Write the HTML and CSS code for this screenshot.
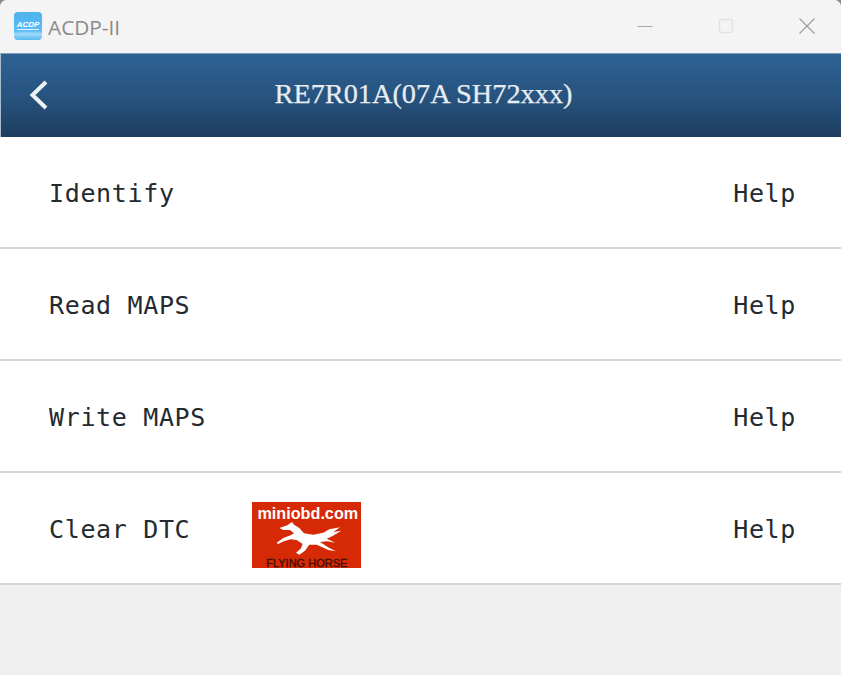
FILE: index.html
```html
<!DOCTYPE html>
<html lang="en">

<head>
    <meta charset="UTF-8">
    <meta name="viewport" content="width=device-width, initial-scale=1.0">
    <title>ACDP-II</title>
    <link rel="stylesheet" href="styles.css">
</head>

<body>
    <div class="window">
        <div class="titlebar">
            <div class="app-icon"><span>ACDP</span></div>
            <div class="app-name">ACDP-II</div>
            <div class="win-buttons">
                <svg class="win-btn" viewBox="0 0 16 16">
                    <path d="M0.5,8.5 L15.5,8.5" stroke="#a8a8a8" stroke-width="1" fill="none"></path>
                </svg>
                <svg class="win-btn" viewBox="0 0 16 16">
                    <rect x="1.5" y="1.5" width="13" height="13" rx="1.5" stroke="#e2e2e2" stroke-width="1.4" fill="none"></rect>
                </svg>
                <svg class="win-btn" viewBox="0 0 16 16">
                    <path d="M0.5,0.5 L15.5,15.5 M15.5,0.5 L0.5,15.5" stroke="#9a9a9a" stroke-width="1.1" fill="none"></path>
                </svg>
            </div>
        </div>

        <div class="header">
            <svg class="back" viewBox="0 0 22 32">
                <path d="M18,3 L4.5,16 18,29" stroke="#eef2f6" stroke-width="4" fill="none"></path>
            </svg>
            <div class="header-title">RE7R01A(07A SH72xxx)</div>
        </div>

        <div class="menu">
            <div class="menu-row">
                <div class="menu-label">Identify</div>
                <div class="menu-help">Help</div>
            </div>
            <div class="menu-row">
                <div class="menu-label">Read MAPS</div>
                <div class="menu-help">Help</div>
            </div>
            <div class="menu-row">
                <div class="menu-label">Write MAPS</div>
                <div class="menu-help">Help</div>
            </div>
            <div class="menu-row">
                <div class="menu-label">Clear DTC</div>
                <div class="stamp">
                    <div class="stamp-site">miniobd.com</div>
                    <svg class="stamp-horse" viewBox="0 0 228 120">
                        <path d="M28,30 L52,22 66,12 72,20 88,30 102,46 130,50 160,44 178,34 210,28 190,42 214,38 188,54 170,62 196,74 172,70 150,72 178,90 198,100 175,96 140,80 118,80 105,98 88,110 78,104 92,92 98,78 80,66 62,64 42,70 24,78 20,74 40,60 62,52 72,46 60,36 40,36 Z" fill="#fff"></path>
                    </svg>
                    <div class="stamp-name">FLYING HORSE</div>
                </div>
                <div class="menu-help">Help</div>
            </div>
        </div>
    </div>
</body>

</html>
```

FILE: styles.css
```css
* {
    box-sizing: border-box;
}

html,
body {
    width: 100vw;
    height: 100vh;
    background: #8c8c8c;
    margin: 0;
    padding: 0;
    overflow: hidden;
}

.window {
    display: flex;
    flex-direction: column;
    height: 100%;
    background: #f0f0f0;
    border-radius: 7px 7px 0 0;
    overflow: hidden;
}

.titlebar {
    display: flex;
    align-items: center;
    height: 53px;
    padding: 0 0 0 14px;
    background: #f4f4f4;
    flex-shrink: 0;
}

.app-icon {
    display: flex;
    justify-content: center;
    padding: 8px 0 0;
    width: 28px;
    height: 28px;
    margin: 0 6px 2px 0;
    border-radius: 4px;
    background: linear-gradient(180deg, #4fb2ee 0%, #5cbdf3 68%, #a4dcf8 78%, #56b8f0 100%);
}

.app-icon span {
    font-family: "Liberation Sans", sans-serif;
    font-size: 8px;
    line-height: 9px;
    font-weight: 700;
    font-style: italic;
    color: #fff;
    border-bottom: 1px solid #e4f5ff;
    height: 10px;
}

.app-name {
    font-family: "Open Sans", sans-serif;
    font-size: 20.8px;
    color: #8b8b8b;
}

.win-buttons {
    display: flex;
    align-items: center;
    gap: 65px;
    margin: 0 26px 2px auto;
}

.win-btn {
    width: 16px;
    height: 16px;
}

.header {
    position: relative;
    display: flex;
    align-items: center;
    justify-content: center;
    height: 84px;
    flex-shrink: 0;
    background: linear-gradient(180deg, #2d6193 0%, #275480 50%, #1d3d60 100%);
    border-top: 1px solid #7f9fbd;
    border-left: 1px solid #a8bccd;
}

.back {
    position: absolute;
    left: 27px;
    top: 25px;
    width: 22px;
    height: 32px;
}

.header-title {
    font-family: "Liberation Serif", serif;
    font-size: 28.3px;
    color: #e8edf2;
    -webkit-text-stroke: 0.25px #e8edf2;
    margin: 0 0 4px 5px;
}

.menu {
    display: flex;
    flex-direction: column;
}

.menu-row {
    display: flex;
    align-items: center;
    height: 112px;
    padding: 2px 45px 0 49px;
    background: #fff;
    border-bottom: 2px solid #d6d6d6;
    font-family: "DejaVu Sans Mono", monospace;
    font-size: 25px;
    letter-spacing: 0.65px;
    color: #232a30;
}

.menu-help {
    margin-left: auto;
}

.stamp {
    display: flex;
    flex-direction: column;
    align-items: center;
    width: 109px;
    height: 66px;
    margin: 12px 0 0 62px;
    background: #d62a06;
    overflow: hidden;
    letter-spacing: 0;
}

.stamp-site {
    font-family: "Liberation Sans", sans-serif;
    font-size: 16.2px;
    line-height: 16px;
    font-weight: 700;
    color: #fff;
    margin: 3px 0 0 2px;
}

.stamp-horse {
    flex-shrink: 0;
    width: 76px;
    height: 40px;
    margin: -3px 0 -1px 3px;
}

.stamp-name {
    font-family: "Liberation Sans", sans-serif;
    font-size: 11px;
    line-height: 12px;
    color: #3a0d04;
    -webkit-text-stroke: 0.3px #3a0d04;
}
```
